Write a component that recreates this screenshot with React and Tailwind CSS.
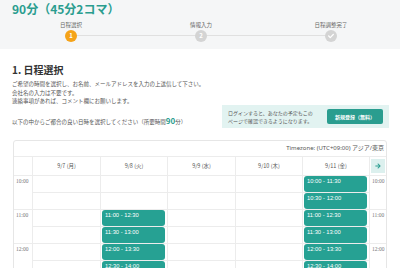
import { FaArrowRight, FaCheck } from "react-icons/fa";

const days = ["9/7 (月)", "9/8 (火)", "9/9 (水)", "9/10 (木)", "9/11 (金)"];

const rows = [
  { time: "10:00", hour: true, slots: { 4: "10:00 - 11:30" } },
  { time: "10:30", hour: false, slots: { 4: "10:30 - 12:00" } },
  { time: "11:00", hour: true, slots: { 1: "11:00 - 12:30", 4: "11:00 - 12:30" } },
  { time: "11:30", hour: false, slots: { 1: "11:30 - 13:00", 4: "11:30 - 13:00" } },
  { time: "12:00", hour: true, slots: { 1: "12:00 - 13:30", 4: "12:00 - 13:30" } },
  { time: "12:30", hour: false, slots: { 1: "12:30 - 14:00", 4: "12:30 - 14:00" } },
];

const jp = "font-['Noto_Sans_CJK_JP','Noto_Sans',sans-serif]";
const cols = "grid grid-cols-[18px_68px_67px_68px_67px_67px_17px]";

const Step = ({ label, children, active }) => (
  <div className="w-[130px] flex flex-col items-center">
    <span className="text-[5.5px] leading-[7px] text-[#666] whitespace-nowrap">{label}</span>
    <div
      className={`mt-[1.5px] w-[12px] h-[12px] rounded-full flex items-center justify-center text-white text-[6px] leading-none font-bold ${
        active ? "bg-[#f5a319]" : "bg-[#d4d4d4]"
      }`}
    >
      {children}
    </div>
  </div>
);

const TimeCell = ({ row, last }) => (
  <div
    className={`h-[17px] pl-[2px] pt-[1px] text-[5.5px] leading-[8px] text-[#777] font-['Liberation_Serif',serif] ${
      row.hour ? "border-t border-[#ececec]" : ""
    } ${last ? "border-l border-[#ececec]" : ""}`}
  >
    {row.hour ? row.time : ""}
  </div>
);

const App = () => {
  return (
    <div className={`w-[400px] h-[268px] overflow-hidden bg-white ${jp}`}>
      <div className="bg-[#f5f6f7] h-[49px] px-[12px]">
        <h1 className="text-[12px] leading-[17px] font-bold text-[#2a9d8f] whitespace-nowrap">
          90分（45分2コマ）
        </h1>
        <div className="relative flex -ml-[6px] mt-[4.5px]">
          <div className="absolute left-[65px] top-[13px] w-[260px] h-px bg-[#e0e0e0]" />
          <div className="relative flex">
            <Step label="日程選択" active>1</Step>
            <Step label="情報入力">2</Step>
            <Step label="日程調整完了">
              <FaCheck size={6} />
            </Step>
          </div>
        </div>
      </div>

      <div className="pt-[15px]">
        <h2 className="px-[12px] text-[10px] leading-[12px] font-bold text-[#333]">
          1. 日程選択
        </h2>
        <div className="flex items-start justify-between pl-[12px] pr-[11px] mt-[4px]">
          <div className="text-[5.5px] leading-[8.7px] text-[#555] whitespace-nowrap">
            <p>ご希望の時間を選択し、お名前、メールアドレスを入力の上送信して下さい。</p>
            <p>会社名の入力は不要です。</p>
            <p>連絡事項があれば、コメント欄にお願いします。</p>
            <p className="mt-[11px]">
              以下の中からご都合の良い日時を選択してください（所要時間
              <span className="text-[8px] font-bold text-[#2a9d8f]">90</span>分）
            </p>
          </div>
          <div className="shrink-0 w-[167px] h-[23px] mt-[25px] bg-[#e2f3f1] flex items-center justify-between pl-[6px] pr-[6px]">
            <div className="text-[5px] leading-[8px] text-[#555] whitespace-nowrap">
              <p>ログインすると、あなたの予定もこの</p>
              <p>ページで確認できるようになります。</p>
            </div>
            <button className="w-[56px] h-[15px] bg-[#2a9d8f] rounded-[2px] text-white text-[5px] font-bold whitespace-nowrap">
              新規登録（無料）
            </button>
          </div>
        </div>

        <div className="mx-[13px] mt-[12px] border border-[#e6e6e6] rounded-[3px]">
          <div className="h-[15px] flex items-center justify-end pr-[2px] text-[6px] text-[#555] font-['Noto_Sans','Noto_Sans_CJK_JP',sans-serif]">
            Timezone: (UTC+09:00) アジア/東京
          </div>
          <div className={`${cols} h-[19px] border-t border-[#ececec]`}>
            <div />
            {days.map((d) => (
              <div
                key={d}
                className="border-l border-[#ececec] flex items-center justify-center text-[5.5px] text-[#555]"
              >
                {d}
              </div>
            ))}
            <div className="border-l border-[#ececec] flex items-center justify-center">
              <div className="w-[14px] h-[14px] bg-[#dcf0ee] flex items-center justify-center text-[#2a9d8f]">
                <FaArrowRight size={6} />
              </div>
            </div>
          </div>
          {rows.map((row) => (
            <div key={row.time} className={cols}>
              <TimeCell row={row} />
              {days.map((d, i) => (
                <div
                  key={d}
                  className="h-[17px] border-l border-t border-[#ececec] flex"
                >
                  {row.slots[i] && (
                    <div className="flex-1 ml-[1px] mr-[2px] bg-[#26a193] rounded-[3px] pl-[3px] pt-[1px] text-[5.8px] leading-[8px] text-white font-['Liberation_Sans',sans-serif]">
                      {row.slots[i]}
                    </div>
                  )}
                </div>
              ))}
              <TimeCell row={row} last />
            </div>
          ))}
        </div>
      </div>
    </div>
  );
};

export default App;
